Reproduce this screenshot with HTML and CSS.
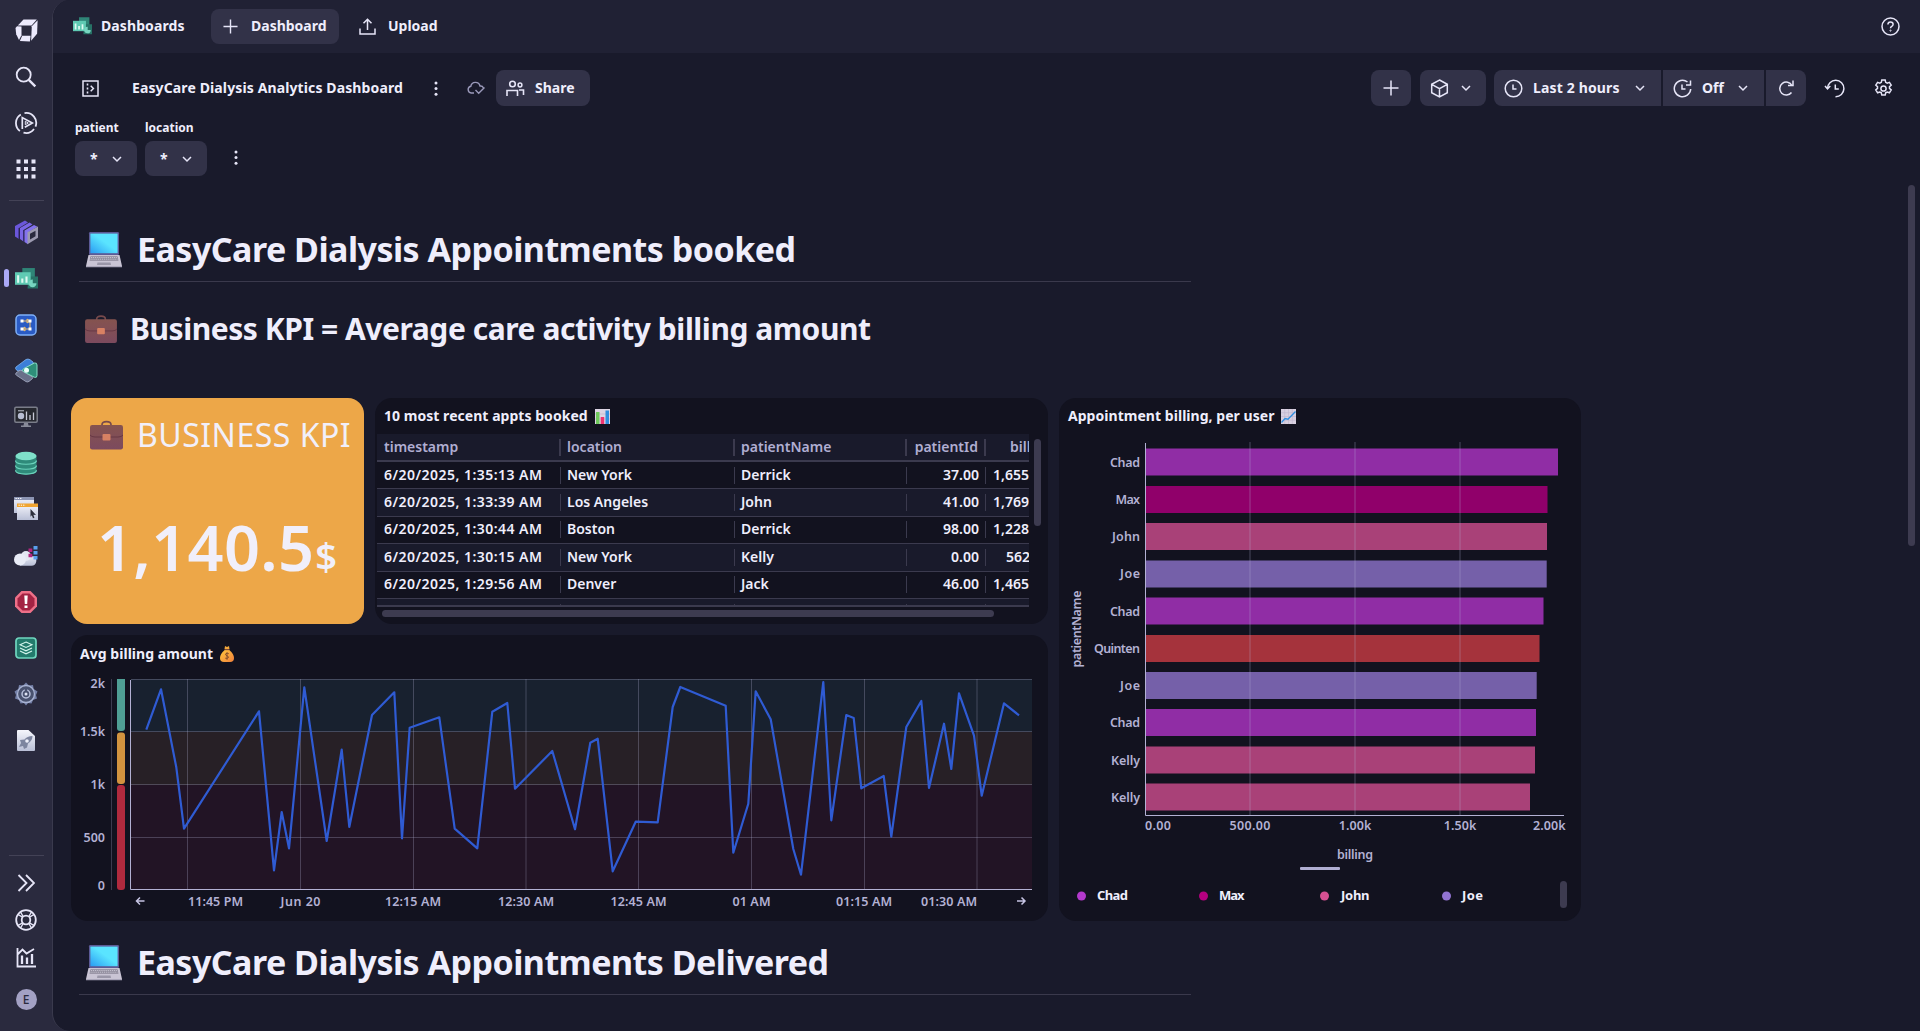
FILE: index.html
```html
<!DOCTYPE html>
<html lang="en">
<head>
<meta charset="utf-8">
<title>EasyCare Dialysis Analytics Dashboard</title>
<link rel="stylesheet" href="styles.css">
</head>
<body>
<svg class="defs" width="0" height="0" aria-hidden="true">
  <defs>
    <linearGradient id="screen" x1="1" y1="0" x2="0" y2="1"><stop offset=".45" stop-color="#5ae4ff"/><stop offset="1" stop-color="#2a9cf2"/></linearGradient>
    <linearGradient id="leather" x1="0" y1="0" x2="0" y2="1"><stop offset="0" stop-color="#85534f"/><stop offset="1" stop-color="#7c4a5e"/></linearGradient>
    <linearGradient id="paper" x1="0" y1="0" x2="0" y2="1"><stop offset="0" stop-color="#f5f6fc"/><stop offset="1" stop-color="#b9bfd6"/></linearGradient>
    <linearGradient id="gold" x1="0" y1="0" x2="1" y2="1"><stop offset="0" stop-color="#ffc83d"/><stop offset="1" stop-color="#f0803c"/></linearGradient>
  </defs>
  <symbol id="laptop" viewBox="0 0 36 36"><rect x="3" y="0" width="30" height="23" rx="1.2" fill="#5c5a96"/><rect x="4.4" y="1.6" width="27.2" height="19.6" fill="url(#screen)"/><path d="M2.5 23h31L36 34H0z" fill="#c9c4d4"/><path d="M4.5 24.2h27l1 4.6h-29z" fill="#8b8798"/><path d="M5 25.6h26M4.5 27.2h27" stroke="#d9d5e2" stroke-width=".8" stroke-dasharray="1.2 .7"/><path d="M11.5 30.5h13l.5 2.6H11z" fill="#9a96a8"/><path d="M0 34h36v1.3H0z" fill="#aaa6ba"/></symbol>
  <symbol id="briefcase" viewBox="0 0 33 29"><path d="M12 6V4.2Q12 1.2 16.500 1.200T21 4.200V6" fill="none" stroke="#774a4c" stroke-width="1.7"/><rect x="0" y="4.500" width="33" height="24.500" rx="2.200" fill="url(#leather)"/><path d="M0 14.500q1.500 2 5 2h23q3.500 0 5-2" fill="none" stroke="#673844" stroke-width="1"/><rect x="12.500" y="13.500" width="8" height="6.500" rx="1" fill="#d88163"/></symbol>
  <symbol id="boards" viewBox="0 0 22 20"><path d="M7 0h12v10H7z" fill="#2f8577"/><path d="M13 8h9v11.500H12z" fill="#277266"/><rect x="0" y="4" width="15" height="12" fill="#5fcab3"/><path d="M2 7h2v7H2zM6 10h2v4H6zM10 8h2v6h-2z" fill="#dffaf2"/><path d="M17 11v3.500h3.500A3.700 3.700 0 1 1 17 11z" fill="#77d5c0"/></symbol>
  <symbol id="chev" viewBox="0 0 10 10"><path d="M1 3l4 4 4-4" fill="none" stroke="#e6e5f7" stroke-width="1.500"/></symbol>
  <symbol id="dots" viewBox="0 0 4 16"><circle cx="2" cy="2" r="1.600"/><circle cx="2" cy="8" r="1.600"/><circle cx="2" cy="14" r="1.600"/></symbol>
  <symbol id="plus" viewBox="0 0 16 16"><path d="M8 .5v15M.5 8h15" fill="none" stroke="#e6e5f7" stroke-width="1.500"/></symbol>
</svg>

<div class="app">
  <nav class="sidebar">
    <a class="item"><svg width="23" height="23" viewBox="0 0 23 23"><path d="M8.500.5h13.300L16.600 6.400H2.800z" fill="#eceafd"/><path d="M22.600 1.200l-.5 13.600-6 7 .7-14.500z" fill="#eceafd"/><path d="M2 7.300l4.500.2v8.700L4 21 1.200 15.200.5 9z" fill="#eceafd"/><path d="M7.200 16.800h8.400l-.7 5.700-10-.6z" fill="#eceafd"/></svg></a>
    <a class="item"><svg width="22" height="22" viewBox="0 0 22 22" class="line"><circle cx="8.700" cy="8.700" r="7"/><path d="M13.800 13.800l6.500 6.500" stroke-width="2.400"/></svg></a>
    <a class="item"><svg width="24" height="24" viewBox="0 0 24 24" class="line"><path d="M10.500 2.100a10 10 0 0 1 11 13.500M20 18a10 10 0 0 1-10.500 3.700M6.800 3.500a10 10 0 0 0-.9 16.500"/><path d="M8.300 18V6.600L18.300 12l-7.500 4.200" stroke-width="1.700"/><path d="M11.300 10.300v3.400l3-1.700z" stroke-width="1"/></svg></a>
    <a class="item"><svg width="20" height="20" viewBox="0 0 20 20" fill="#e6e5f7"><path d="M.5.500h4v4h-4zM8 .5h4v4H8zM15.500.500h4v4h-4zM.5 8h4v4h-4zM8 8h4v4H8zM15.500 8h4v4h-4zM.5 15.500h4v4h-4zM8 15.500h4v4H8zM15.500 15.500h4v4h-4z"/></svg></a>
    <hr>
    <a class="item"><svg width="23" height="25" viewBox="0 0 23 25"><path d="M0 6L10 .5l3 2-9 5.500v11l-4-2.500z" fill="#6b57da"/><path d="M4 8v11" stroke="#2b2363"/><path d="M5 8l9.500-5.500 3 2-9 5.500v11.500L5 19z" fill="#7a66e6"/><path d="M8.800 10v11.500" stroke="#2b2363"/><path d="M9.500 10.500L19 5l3.500 1.700L13 12.500v11.700L9.500 22z" fill="#8372ee"/><path d="M12.500 12.300L23 6.500v11.300l-10.500 6.400z" fill="#9c9ab0"/><path d="M15 13.700l5.500-3v5.500L15 19.600z" fill="#2a2a3e"/></svg></a>
    <a class="item active"><svg width="23" height="21"><use href="#boards"/></svg></a>
    <a class="item"><svg width="22" height="22" viewBox="0 0 22 22"><rect x="1" y="1" width="20" height="20" rx="4" fill="#2a5bc4" stroke="#7fb0f6" stroke-width="1.500"/><path d="M7 7h8v8H7M15 7l-3-2v4zM7 15l3-2v4z" stroke="#f2c16b" fill="none"/><path d="M5.500 5.500h3v3h-3zM13.500 5.500h3v3h-3zM5.500 13.500h3v3h-3zM13.500 13.500h3v3h-3z" fill="#fff"/></svg></a>
    <a class="item"><svg width="23" height="25" viewBox="0 0 23 25"><path d="M1 9L11 1.500q2-1 4 .2l3 2.300q1 1-.5 2L7 13.500q-1.500.8-3 0L1 11.500q-1-1.200 0-2.500z" fill="#3c7fd8" stroke="#7db4f4" stroke-width=".8"/><path d="M1 15l3-2.300q1.500-.8 3 0l10 6q1.500 1 .3 2l-3.300 2.700q-1.500 1-3 .2L1.500 17.300Q0 16.300 1 15z" fill="#697089" stroke="#aab0c8" stroke-width=".8"/><path d="M19.500 5q2.500-.5 2.500 2v10.500q0 2.500-2.500 1.800L8.500 13.700q-2-1.500 0-3z" fill="#2e8e79" stroke="#84ddc5"/><circle cx="11.500" cy="12.200" r="2.500" fill="#e9fffa"/></svg></a>
    <a class="item"><svg width="24" height="22" viewBox="0 0 24 22"><rect x=".8" y="1.300" width="22.400" height="15" rx="1.200" fill="#26282f" stroke="#7a7d89" stroke-width="1.500"/><path d="M4 4.800h6" stroke="#c7cad6"/><circle cx="7" cy="10" r="3.200" fill="#b7bdd2"/><path d="M12.500 14V5.500M16 14V9M19.500 14V6.500" stroke="#c7cad6" stroke-width="1.300"/><path d="M10 17h4l.5 2.500h2.500V21H7v-1.500h2.500z" fill="#878a98"/></svg></a>
    <a class="item"><svg width="22" height="24" viewBox="0 0 22 24"><path d="M.5 4.500v15c0 5.300 21 5.300 21 0v-15z" fill="#2f8a7a"/><path d="M.5 9.500c0 5 21 5 21 0M.5 14.500c0 5 21 5 21 0M.5 19.300c0 5 21 5 21 0" fill="none" stroke="#6bd3bc" stroke-width="1.200"/><ellipse cx="11" cy="5" rx="10.500" ry="4.300" fill="#7fe0ca"/></svg></a>
    <a class="item"><svg width="24" height="24" viewBox="0 0 24 24"><path d="M0 0h20v16H0z" fill="url(#paper)"/><path d="M0 0h20v3H0z" fill="#8c94b2"/><path d="M1.500 1.500h6" stroke="#fff" stroke-dasharray="1.300 1"/><path d="M3 7h21v16H3z" fill="url(#paper)"/><path d="M3 6.500h21V10H3z" fill="#f0a42f"/><path d="M4.500 8.200h7" stroke="#fff" stroke-dasharray="1.300 1"/><path d="M16.500 12l5.500 6-2.600-.2 1 3-1.400.5-1.200-3-1.300 1.500z" fill="#2b2d3a"/></svg></a>
    <a class="item"><svg width="24" height="22" viewBox="0 0 24 22"><path d="M6 20.700h11.500a5 5 0 0 0 2-9.500h-3.500a5.500 5.500 0 0 0-9.500-1.500z" fill="url(#paper)"/><circle cx="12" cy="11" r="5" fill="#e4e7f3"/><circle cx="6" cy="14.500" r="6" fill="#e9ecf7"/><path d="M19.500 1h4v3.500h-4zM19.500 6h4v3.500h-4zM19.500 11h4v3.500h-4z" fill="#5aa0ee"/><path d="M14.500 3.500h3.800V7h-3.800zM14.500 8.700h3.800v3.500h-3.800z" fill="#b3267f"/></svg></a>
    <a class="item"><svg width="24" height="24" viewBox="0 0 24 24"><path d="M7.500 1h9L23 7.500v9L16.500 23h-9L1 16.500v-9z" fill="#ee7088"/><path d="M8.500 3.500h7l5 5v7l-5 5h-7l-5-5v-7z" fill="#a32343"/><path d="M10.300 5.500h3.400l-.5 8.500h-2.400zM10.500 15.500h3V18h-3z" fill="#fff"/></svg></a>
    <a class="item"><svg width="22" height="22" viewBox="0 0 22 22"><rect x="1" y="1" width="20" height="20" rx="3" fill="#237a6c" stroke="#6fd6bf" stroke-width="1.700"/><path d="M11 5l6 2.700-6 2.800-6-2.800zM5 11l6 2.800 6-2.800M5 14l6 2.800 6-2.800" fill="none" stroke="#d4f6ee" stroke-width="1.100"/></svg></a>
    <a class="item"><svg width="24" height="24" viewBox="0 0 24 24"><path d="M12 .5l3 3 4-.5.700 4L23.500 9.500 22 13l1 3.500-4 1.500-1.500 3.500-3.500-.5L12 23.500l-2-2.500-3.500.500L5 18l-4-1.500L2 13 .5 9.500 4.300 7 5 3l4 .5z" fill="#7480a8"/><circle cx="12" cy="12" r="8.500" fill="#49526f" stroke="#a9b3d2" stroke-width="1.300"/><circle cx="12" cy="12" r="4" fill="none" stroke="#b9c1dc" stroke-width="1.500"/><path d="M12 7v5" stroke="#49526f" stroke-width="2.500"/><circle cx="12" cy="12" r="1.500" fill="#dfe4f4"/></svg></a>
    <a class="item"><svg width="18" height="21" viewBox="0 0 18 21"><path d="M1 0h10.500L18 6v14q0 1-1 1H1q-1 0-1-1V1q0-1 1-1z" fill="url(#paper)"/><path d="M15.500 6q-5.500 0-8 3.500L3 10l1 3-2 4 4-1 1 3 3-1.500 1-4Q15.500 11 15.500 6z" fill="#7d859f"/><circle cx="10" cy="11" r="1.800" fill="#eef0fa"/></svg></a>
    <hr class="foot-rule">
    <a class="item short"><svg width="18" height="18" viewBox="0 0 18 18" class="line"><path d="M1.500 1l8 8-8 8M9 1l8 8-8 8" stroke-width="1.800"/></svg></a>
    <a class="item short"><svg width="22" height="22" viewBox="0 0 22 22" class="line"><circle cx="11" cy="11" r="9.800"/><circle cx="11" cy="11" r="4.300"/><path d="M3 5.500l4.500 2.700M5.500 3l2.700 4.500M19 5.500l-4.500 2.700M16.500 3l-2.700 4.500M3 16.500l4.500-2.700M5.500 19l2.700-4.500M19 16.500l-4.500-2.700M16.500 19l-2.700-4.500" stroke-width="1.400"/></svg></a>
    <a class="item short"><svg width="20" height="20" viewBox="0 0 20 20" class="line"><path d="M1.500 0v18.500H20M1.500 6.500l5-5 4 4L18 1"/><path d="M6 16V7.500M11 16V9.500M16 16V6" stroke-width="2.300"/></svg></a>
    <a class="item short avatar"><span>E</span></a>
  </nav>

  <main class="main">
    <header class="topbar">
      <svg width="19" height="18"><use href="#boards"/></svg>
      <span class="t-dashboards">Dashboards</span>
      <button class="btn new"><svg width="15" height="15"><use href="#plus"/></svg><span>Dashboard</span></button>
      <svg class="line up" width="17" height="17" viewBox="0 0 17 17"><path d="M8.500 12V1.500M4.500 5.200l4-4 4 4M1 10.500V16h15v-5.500" stroke-width="1.500"/></svg>
      <span class="t-upload">Upload</span>
      <svg class="line help" width="19" height="19" viewBox="0 0 19 19"><circle cx="9.500" cy="9.500" r="8.500" stroke-width="1.500"/><path d="M6.900 7.600q0-2.600 2.600-2.600t2.600 2.300q0 1.300-1.300 2T9.500 11.300" stroke-width="1.500"/><circle cx="9.500" cy="13.600" r=".6" stroke-width="1"/></svg>
    </header>

    <section class="toolbar">
      <svg class="line" width="17" height="17" viewBox="0 0 17 17"><path d="M1 1h15v15H1z" stroke-width="1.500"/><path d="M5.500 3.500v10" stroke-width="1.600" stroke-dasharray="2 2"/><path d="M8.700 5.800l2.700 2.700-2.700 2.700" stroke-width="1.500"/></svg>
      <h1 class="title">EasyCare Dialysis Analytics Dashboard</h1>
      <svg class="kebab" width="4" height="15"><use href="#dots"/></svg>
      <svg class="cloud" width="18" height="14" viewBox="0 0 18 14"><path d="M7 12H4.200a3.400 3.400 0 0 1-.4-6.700A4.700 4.700 0 0 1 13 5a3 3 0 0 1 3.300 1.800M8.500 9l3.200 3.200L17.500 6.500" fill="none" stroke="#9a99ba" stroke-width="1.400"/></svg>
      <button class="btn share"><svg class="line" width="19" height="17" viewBox="0 0 19 17"><circle cx="6.500" cy="4" r="2.800" stroke-width="1.600"/><circle cx="14" cy="5" r="1.900" stroke-width="1.500"/><path d="M1 16v-5.500h10.500V16M13 10h4.500v5" stroke-width="1.600"/></svg><span>Share</span></button>
      <div class="right">
        <button class="btn sq"><svg width="16" height="16"><use href="#plus"/></svg></button>
        <button class="btn cube"><svg class="line" width="19" height="19" viewBox="0 0 19 19"><path d="M9.500 1l7.800 4.300v8.400L9.500 18l-7.800-4.300V5.300zM1.700 5.300l7.800 4.300 7.800-4.300M9.500 9.600V18" stroke-width="1.500"/></svg><svg width="10" height="10"><use href="#chev"/></svg></button>
        <div class="group">
          <button class="btn range"><svg class="line" width="19" height="19" viewBox="0 0 19 19"><circle cx="9.500" cy="9.500" r="8.300" stroke-width="1.500"/><path d="M9 5.500V10h3.500" stroke-width="1.500"/></svg><span>Last 2 hours</span><svg width="10" height="10"><use href="#chev"/></svg></button>
          <button class="btn off"><svg class="line" width="19" height="19" viewBox="0 0 19 19"><path d="M14.500 3a8.200 8.200 0 1 0 3.200 7M13 6h4.500V1.500M9 5.500V10h3.500" stroke-width="1.500"/></svg><span>Off</span><svg width="10" height="10"><use href="#chev"/></svg></button>
          <button class="btn refresh"><svg class="line" width="15" height="16" viewBox="0 0 15 16"><path d="M13 5.500A6.500 6.500 0 1 0 12.500 12.500M14 .5v5H9" stroke-width="1.500"/></svg></button>
        </div>
        <svg class="line hist" width="21" height="19" viewBox="0 0 21 19"><path d="M3.500 9.500A8.200 8.200 0 1 1 11.500 17.700M1 7l2.500 2.800L6.300 7M11.300 5.500V10h3.500" stroke-width="1.500"/></svg>
        <svg class="line" width="19" height="19" viewBox="0 0 19 19"><circle cx="9.500" cy="9.500" r="2.600" stroke-width="1.500"/><path d="M7.800 1h3.400l.5 2.300 1.500.8 2.200-.8 1.800 2.900-1.700 1.500v1.700l1.700 1.500-1.800 2.900-2.200-.8-1.500.8-.5 2.300H7.800l-.5-2.300-1.500-.8-2.200.8-1.800-2.900 1.700-1.500V7.700L1.800 6.200l1.800-2.900 2.200.8 1.500-.8z" stroke-width="1.500"/></svg>
      </div>
    </section>

    <section class="filters">
      <label class="filter"><span class="f-patient">patient</span><button class="btn pick"><span>*</span><svg width="10" height="10"><use href="#chev"/></svg></button></label>
      <label class="filter"><span class="f-location">location</span><button class="btn pick"><span>*</span><svg width="10" height="10"><use href="#chev"/></svg></button></label>
      <svg class="kebab" width="4" height="15"><use href="#dots"/></svg>
    </section>

    <div class="content">
      <div class="md first">
        <h2 class="h-big"><svg width="36" height="36"><use href="#laptop"/></svg><span class="t-booked">EasyCare Dialysis Appointments booked</span></h2>
        <h3 class="h-mid"><svg width="32" height="28"><use href="#briefcase"/></svg><span class="t-avg">Business KPI = Average care activity billing amount</span></h3>
      </div>

      <div class="tiles">
        <article class="kpi">
          <div class="kpi-head"><svg width="33" height="30"><use href="#briefcase"/></svg><span>BUSINESS KPI</span></div>
          <div class="kpi-value"><span class="num">1,140.5</span><span class="unit">$</span></div>
        </article>

        <article class="card recent">
          <h4><span class="t-recent">10 most recent appts booked</span><svg width="15" height="15" viewBox="0 0 15 15"><path d="M0 0h15v15H0z" fill="#ddd5e4"/><path d="M0 5h15M0 10h15" stroke="#bdb3c8" stroke-width=".6"/><path d="M1 3h3.500v12H1z" fill="#6fc95c"/><path d="M5.700 8h3.500v7H5.700z" fill="#ee3470"/><path d="M10.500 1.500H14V15h-3.500z" fill="#2f8fe0"/></svg></h4>
          <div class="table-area">
            <div class="table">
              <div class="tr th"><span>timestamp</span><span>location</span><span>patientName</span><span>patientId</span><span class="h-bill">bill</span></div>
              <div class="tr"><span>6/20/2025, 1:35:13 AM</span><span>New York</span><span>Derrick</span><span>37.00</span><span>1,655</span></div>
              <div class="tr"><span>6/20/2025, 1:33:39 AM</span><span>Los Angeles</span><span>John</span><span>41.00</span><span>1,769</span></div>
              <div class="tr"><span>6/20/2025, 1:30:44 AM</span><span>Boston</span><span>Derrick</span><span>98.00</span><span>1,228</span></div>
              <div class="tr"><span>6/20/2025, 1:30:15 AM</span><span>New York</span><span>Kelly</span><span>0.00</span><span class="three">562</span></div>
              <div class="tr"><span>6/20/2025, 1:29:56 AM</span><span>Denver</span><span>Jack</span><span>46.00</span><span>1,465</span></div>
              <div class="tr"><span></span><span></span><span></span><span></span><span></span></div>
            </div>
            <i class="vbar"></i>
          </div>
          <i class="hbar"></i>
        </article>

        <article class="card avg">
          <h4><span class="t-amount">Avg billing amount</span><svg width="14" height="16" viewBox="0 0 14 16"><path d="M5 0l2 1 2-1 .5 3h-5z" fill="#f2a63b"/><path d="M4.700 4h4.600Q14 8 14 12t-4 4H4q-4 0-4-4t4.700-8z" fill="url(#gold)"/><path d="M4.500 3.700h5" stroke="#9a5a3a"/><path d="M8.800 7.700q-1.800-1-3 0t1.200 2.100 1.200 2-3 .4M7 6.300v7.500" fill="none" stroke="#7a4a2a" stroke-width=".9"/></svg></h4>
          <svg class="chart" width="977" height="250" viewBox="71 671 977 250">
            <rect x="131" y="679" width="901" height="53" fill="#18212f"/>
            <rect x="131" y="732" width="901" height="53" fill="#272026"/>
            <rect x="131" y="785" width="901" height="104" fill="#221425"/>
            <path d="M131 679.500h901M131 731.500h901M131 784.500h901M131 837.500h901M187.500 679v210M300.500 679v210M413.500 679v210M526 679v210M638.500 679v210M751.500 679v210M864.500 679v210M977 679v210" stroke="#b8b6dc" stroke-opacity=".28" fill="none"/>
            <path d="M111.500 679v211" stroke="#3c3b4f"/>
            <path d="M117 679h8v49q0 3-3 3h-2q-3 0-3-3z" fill="#4f9e94"/>
            <rect x="117" y="732.500" width="8" height="51.500" rx="3" fill="#d2933f"/>
            <rect x="117" y="785" width="8" height="105" rx="3" fill="#b02a3e"/>
            <path d="M130.500 680v209.500H1032" fill="none" stroke="#b3b1d3"/>
            <polyline class="series" points="146.300,729.700 161,689.300 176.300,767.300 184,828.700 259,711.300 274,870.300 281.700,812 289,848.300 304.300,687.300 326.700,841 341.700,749.700 349.300,827 372,715 394.300,692.300 402,838.300 409.700,727.700 439.300,717.300 454.700,828.700 477.300,848.300 492.300,711.700 507.300,703 515,788.700 552.300,751 575,829.300 590.300,742.700 597.700,738.700 612.700,871.300 635.700,821.700 657.700,822.300 672.700,707 680.300,687 725.700,705.700 733.300,852.700 748.300,803.700 755.700,691.300 770.700,719.300 793.300,849 801,874.700 823.300,682 831.300,820.300 846.300,715 853.700,718 861.300,788.300 883.700,776 891.300,836.700 906.300,727 921.300,701 929,788 944,723.700 951.300,769 959,693.300 974,735.700 981.700,795.700 1004,703.300 1019,715.300"/>
            <g class="axis end"><text x="105" y="688">2k</text><text x="105" y="736">1.5k</text><text x="105" y="789">1k</text><text x="105" y="842">500</text><text x="105" y="890">0</text></g>
            <g class="axis mid"><text x="215.500" y="906" textLength="55">11:45 PM</text><text x="300.500" y="906" textLength="40">Jun 20</text><text x="413" y="906" textLength="56">12:15 AM</text><text x="526" y="906" textLength="56">12:30 AM</text><text x="638.500" y="906" textLength="56">12:45 AM</text><text x="751.500" y="906" textLength="38">01 AM</text><text x="864" y="906" textLength="56">01:15 AM</text><text x="949" y="906" textLength="56">01:30 AM</text></g>
            <path d="M144.500 901h-8M140 897.500l-3.500 3.500 3.500 3.500M1017 901h8M1021.500 897.500l3.500 3.500-3.500 3.500" fill="none" stroke="#c6c4e3" stroke-width="1.500"/>
          </svg>
        </article>

        <article class="card bars">
          <h4><span class="t-bars">Appointment billing, per user</span><svg width="15" height="15" viewBox="0 0 15 15"><path d="M0 0h15v15H0z" fill="#d8d0e0"/><path d="M0 3.700h15M0 7.500h15M0 11.300h15M3.700 0v15M7.500 0v15M11.300 0v15" stroke="#c0b6cc" stroke-width=".6"/><path d="M.5 13.500L4 9.500l3 .7L14.500 2.500" fill="none" stroke="#2f8fe0" stroke-width="1.300"/></svg></h4>
          <svg class="chart" width="522" height="487" viewBox="1059 434 522 487">
            <g>
              <rect x="1146" y="448.500" width="412" height="27" fill="#902da5"/><rect x="1146" y="486" width="401.500" height="27" fill="#90006a"/><rect x="1146" y="523" width="401" height="27" fill="#a94178"/><rect x="1146" y="560.500" width="400.700" height="27" fill="#7560a9"/><rect x="1146" y="597.500" width="397.500" height="27" fill="#902da5"/><rect x="1146" y="635" width="393.500" height="27" fill="#a5333c"/><rect x="1146" y="672" width="390.700" height="27" fill="#7560a9"/><rect x="1146" y="709" width="390" height="27" fill="#902da5"/><rect x="1146" y="746.500" width="389" height="27" fill="#a94178"/><rect x="1146" y="783.500" width="384" height="27" fill="#a94178"/>
            </g>
            <path d="M1250 442v373M1355 442v373M1460 442v373" stroke="#b8b6dc" stroke-opacity=".17" stroke-width="2"/>
            <path d="M1145.500 443v372.500H1564" fill="none" stroke="#b3b1d3"/>
            <g class="axis end"><text x="1140" y="467" textLength="30">Chad</text><text x="1140" y="504" textLength="24.500">Max</text><text x="1140" y="541" textLength="28">John</text><text x="1140" y="578" textLength="20">Joe</text><text x="1140" y="616" textLength="30">Chad</text><text x="1140" y="653" textLength="46">Quinten</text><text x="1140" y="690" textLength="20">Joe</text><text x="1140" y="727" textLength="30">Chad</text><text x="1140" y="765" textLength="29">Kelly</text><text x="1140" y="802" textLength="29">Kelly</text><text x="1565.500" y="830" textLength="32.500">2.00k</text></g>
            <g class="axis mid"><text x="1158" y="830" textLength="26">0.00</text><text x="1250" y="830" textLength="41">500.00</text><text x="1355" y="830" textLength="32.500">1.00k</text><text x="1460" y="830" textLength="32.500">1.50k</text><text x="1355" y="859" textLength="36">billing</text><text transform="translate(1081 629) rotate(-90)" textLength="77">patientName</text></g>
            <rect x="1300" y="867" width="40" height="3" rx="1" fill="#b0aed2"/>
            <circle cx="1081.500" cy="896" r="4.500" fill="#b339cc"/><circle cx="1203.500" cy="896" r="4.500" fill="#b4007f"/><circle cx="1324.500" cy="896" r="4.500" fill="#d65092"/><circle cx="1446.500" cy="896" r="4.500" fill="#9274d2"/>
            <g class="legend"><text x="1097" y="900" textLength="31">Chad</text><text x="1219" y="900" textLength="25.500">Max</text><text x="1341" y="900" textLength="28.500">John</text><text x="1462" y="900" textLength="21">Joe</text></g>
            <rect x="1560" y="881" width="7" height="27" rx="3.500" fill="#3d3b50"/>
          </svg>
        </article>
      </div>

      <div class="md second">
        <h2 class="h-big"><svg width="36" height="36"><use href="#laptop"/></svg><span class="t-delivered">EasyCare Dialysis Appointments Delivered</span></h2>
      </div>
      <i class="page-bar"></i>
    </div>
  </main>
</div>
</body>
</html>
```
FILE: styles.css
```css
* { box-sizing: border-box; }
body { margin: 0; width: 1920px; height: 1031px; overflow: hidden; background: #2a2a3e; color: #efeefc; font: 600 14px/20px "Noto Sans", "Open Sans", sans-serif; }
h1, h2, h3, h4 { margin: 0; font-weight: 700; white-space: nowrap; }
svg { flex: none; display: block; }
.defs { position: absolute; }
.line { fill: none; stroke: #e6e5f7; stroke-width: 1.8; }
.app { display: flex; height: 1031px; }

/* Navigation rail */
.sidebar { width: 52px; flex: none; display: flex; flex-direction: column; padding-top: 7.500px; }
.item { height: 46.2px; flex: none; display: flex; align-items: center; justify-content: center; position: relative; }
.item.short { height: 37.500px; }
.active::before { content: ""; position: absolute; left: 4px; top: 14px; width: 5px; height: 18px; border-radius: 2.500px; background: #aba9f7; }
.sidebar hr { width: 35px; height: 1px; border: 0; margin: 8px 0 8px 9px; background: #434256; flex: none; }
.sidebar .foot-rule { margin-top: 91.500px; margin-bottom: 8px; }
.avatar { margin-top: 4px; }
.avatar span { width: 21px; height: 21px; border-radius: 50%; background: #a3a1c4; color: #2a2a3e; font-size: 12px; line-height: 21px; text-align: center; font-weight: 500; }

.main { flex: 1; background: #191a2b; border-left: 1px solid #3a3a4d; border-radius: 18px 0 0 18px; overflow: hidden; display: flex; flex-direction: column; }
.topbar { height: 53px; flex: none; background: #202134; display: flex; align-items: center; padding: 0 20px 1px; font-weight: 700; }
.btn { height: 36px; flex: none; border: 0; border-radius: 8px; background: #323248; color: inherit; font: inherit; font-weight: 700; text-align: left; display: flex; align-items: center; padding: 0; white-space: nowrap; }
.t-dashboards { width: 119px; padding-left: 9px; letter-spacing: .1px; }
.new { height: 35px; width: 128px; padding-left: 12px; gap: 13px; }
.up { margin-left: 20px; margin-right: 12px; }
.help { margin-left: auto; }

.toolbar { display: flex; align-items: center; height: 36px; margin-top: 17px; padding: 0 27px 0 29px; flex: none; }
.title { font-size: 14px; line-height: 20px; margin-left: 33px; width: 302px; letter-spacing: .12px; }
.kebab { fill: #e6e5f7; }
.cloud { margin-left: 29px; margin-right: 11px; }
.share { width: 94px; padding-left: 10px; gap: 10px; }
.right { display: flex; align-items: center; margin-left: auto; }
.sq { width: 40px; justify-content: center; margin-right: 9px; }
.cube { width: 66px; padding-left: 10px; gap: 12px; margin-right: 8px; }
.group { display: flex; gap: 2px; margin-right: 18px; }
.range { width: 167px; padding-left: 10px; border-radius: 8px 0 0 8px; }
.range span { width: 112px; padding-left: 10px; letter-spacing: .15px; }
.off { width: 101px; padding-left: 10px; border-radius: 0; }
.off span { width: 46px; padding-left: 10px; }
.refresh { width: 40px; justify-content: center; border-radius: 0 8px 8px 0; }
.hist { margin-right: 29px; }

.filters { display: flex; gap: 8px; padding: 12px 22px 0; height: 70px; flex: none; }
.filter { width: 62px; display: flex; flex-direction: column; gap: 3px; font-size: 12px; font-weight: 700; }
.filter > span { white-space: nowrap; }
.pick { height: 35px; padding-left: 15px; font-size: 14px; gap: 14px; }
.pick span { width: 8px; }
.filters .kebab { margin: 32px 0 0 19px; }

.content { position: relative; flex: 1; padding-left: 18px; }
.md { width: 1112px; margin-left: 8px; }
.first { height: 222px; padding-top: 56px; }
.h-big { height: 50px; border-bottom: 1px solid #3a394c; padding: 0 0 0 7px; display: flex; align-items: flex-start; gap: 15px; font-size: 34px; line-height: 35px; letter-spacing: -.52px; }
.h-mid { display: flex; align-items: center; padding: 29px 0 0 6px; gap: 13px; font-size: 30px; line-height: 36px; letter-spacing: -.45px; }
.tiles { display: grid; grid-template-columns: 293px 673px 522px; grid-template-rows: 226px 286px; gap: 11px; }
.kpi { background: #eda748; border-radius: 16px; color: #f1effa; }
.kpi-head { display: flex; align-items: center; gap: 14px; padding: 15px 0 0 19px; height: 58px; font-size: 32px; letter-spacing: .5px; font-weight: 400; white-space: nowrap; }
.kpi-value { display: flex; align-items: baseline; padding-left: 26px; margin-top: 51px; line-height: 80px; }
.num { font-size: 63px; letter-spacing: .3px; }
.unit { font-size: 38px; margin-left: 1px; }
.card { background: #12121f; border-radius: 17px; overflow: hidden; display: flex; flex-direction: column; min-width: 0; }
.card h4 { height: 36px; flex: none; font-size: 14px; letter-spacing: .04px; display: flex; align-items: center; gap: 7px; padding-left: 9px; }
.avg { grid-column: 1 / 3; grid-row: 2; }
.avg h4 { padding-top: 1px; }
.bars { grid-column: 3; grid-row: 1 / 3; }

.table-area { display: flex; gap: 5px; margin-left: 2px; height: 173px; }
.table { width: 652px; height: 173px; overflow: hidden; border-bottom: 2px solid #3b3a4e; }
.tr { display: grid; grid-template-columns: 184px 174px 172px 79px 43px; height: 27.400px; align-items: center; border-bottom: 1px solid #3b3a4e; line-height: 16px; white-space: nowrap; }
.tr:nth-child(odd) { background: #191a2b; }
.tr:nth-child(even) { background: #12121f; }
.tr span { height: 17px; padding-left: 6px; border-right: 1px solid #3b3a4e; }
.tr span:nth-child(1) { padding-left: 7px; letter-spacing: .47px; }
.tr span:nth-child(4) { text-align: right; padding-right: 6px; padding-left: 0; }
.tr span:nth-child(5) { border: 0; overflow: hidden; padding-left: 7px; }
.tr span.three { padding-left: 20px; }
.th { height: 28px; border-bottom-width: 2px; color: #b0aed2; }
.tr.th span { border-right-width: 2px; letter-spacing: 0; }
.tr span.h-bill:nth-child(5) { padding-left: 24px; }
.tr span.three:nth-child(5) { padding-left: 20px; }
.vbar { width: 7px; height: 87px; margin-top: 5px; background: #3d3b50; border-radius: 4px; }
.hbar { width: 612px; height: 7px; margin: 3px 0 0 7px; background: #3d3b50; border-radius: 4px; }

.series { fill: none; stroke: #2f5bd3; stroke-width: 2.200; stroke-linejoin: round; }
.axis { fill: #b3b1d3; font-size: 12.500px; font-weight: 600; }
.legend { fill: #efeefc; font-size: 13px; font-weight: 700; }
.end { text-anchor: end; }
.mid { text-anchor: middle; }
.second { padding-top: 24px; }
.page-bar { position: absolute; right: 5px; top: 9px; width: 7px; height: 361px; border-radius: 4px; background: #3d3b50; }
```
